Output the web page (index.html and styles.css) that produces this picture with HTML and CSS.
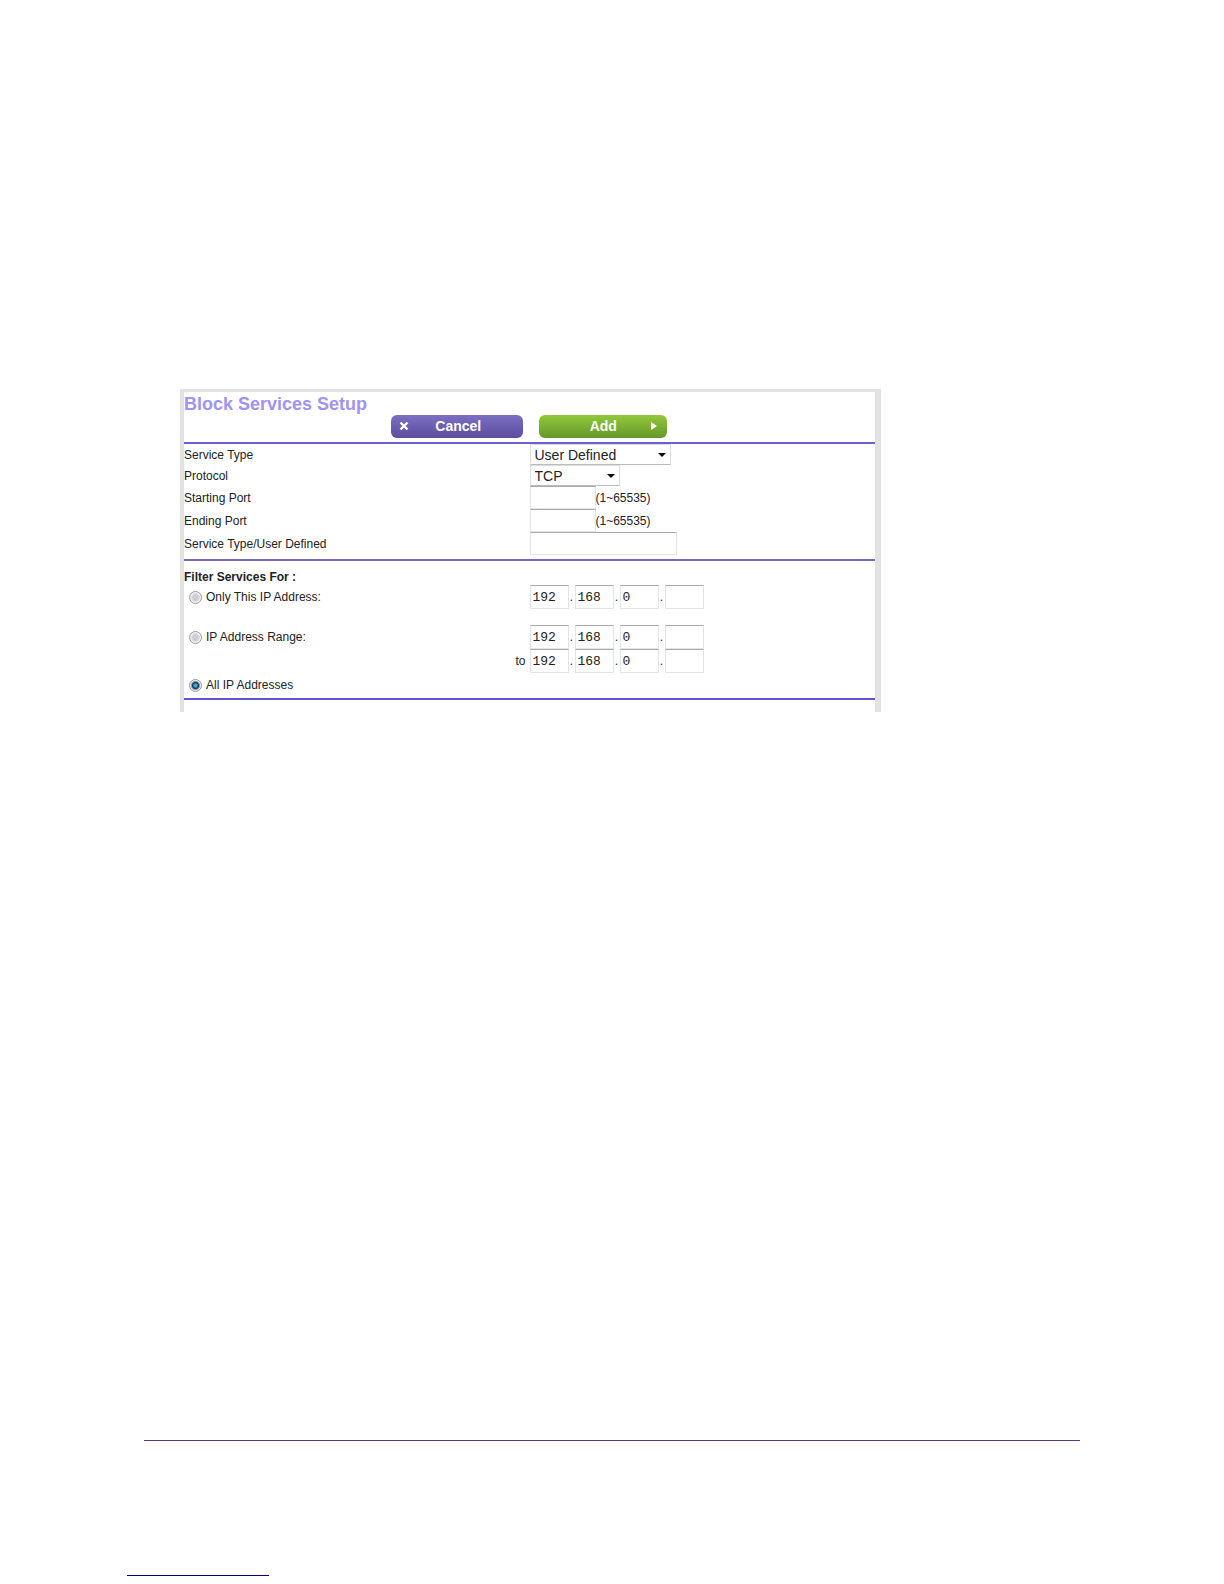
FILE: index.html
```html
<!DOCTYPE html>
<html lang="en">
<head>
<meta charset="utf-8">
<meta name="viewport" content="width=device-width, initial-scale=1">
<title>Block Services Setup</title>
<link rel="stylesheet" href="styles.css">
</head>
<body>
<main>
<form class="panel">
  <h1>Block Services Setup</h1>
  <div class="actions">
    <button type="button" class="btn cancel">
      <svg width="10" height="10" viewBox="0 0 10 10" aria-hidden="true"><path d="M1.5 1.5l7 7M8.5 1.5l-7 7" stroke="#fff" stroke-width="2.4"/></svg>
      <span>Cancel</span>
    </button>
    <button type="button" class="btn add">
      <span>Add</span>
      <svg width="7" height="8" viewBox="0 0 7 8" aria-hidden="true"><path d="M0 0l6 4-6 4z" fill="#fff"/></svg>
    </button>
  </div>
  <section class="service">
    <div class="row"><label for="service">Service Type</label>
      <div class="field select wide"><select id="service"><option>User Defined</option></select><svg width="8" height="4" viewBox="0 0 8 4" aria-hidden="true"><path d="M0 0h8L4 4z"/></svg></div></div>
    <div class="row"><label for="protocol">Protocol</label>
      <div class="field select"><select id="protocol"><option>TCP</option></select><svg width="8" height="4" viewBox="0 0 8 4" aria-hidden="true"><path d="M0 0h8L4 4z"/></svg></div></div>
    <div class="row tall"><label for="start">Starting Port</label>
      <div class="field"><input type="text" class="port" id="start"><span class="hint">(1~65535)</span></div></div>
    <div class="row tall"><label for="end">Ending Port</label>
      <div class="field"><input type="text" class="port" id="end"><span class="hint">(1~65535)</span></div></div>
    <div class="row tall"><label for="custom">Service Type/User Defined</label>
      <div class="field"><input type="text" class="name" id="custom"></div></div>
  </section>
  <section class="filter">
    <h2>Filter Services For :</h2>
    <div class="row ip-row spaced">
      <label class="choice"><input type="radio" name="scope">Only This IP Address:</label>
      <div class="ip"><input type="text" value="192" aria-label="Address part 1"><i>.</i><input type="text" value="168" aria-label="Address part 2"><i>.</i><input type="text" value="0" aria-label="Address part 3"><i>.</i><input type="text" aria-label="Address part 4"></div>
    </div>
    <div class="row ip-row">
      <label class="choice"><input type="radio" name="scope">IP Address Range:</label>
      <div class="ip"><input type="text" value="192" aria-label="Range start part 1"><i>.</i><input type="text" value="168" aria-label="Range start part 2"><i>.</i><input type="text" value="0" aria-label="Range start part 3"><i>.</i><input type="text" aria-label="Range start part 4"></div>
    </div>
    <div class="row ip-row">
      <span class="to">to</span>
      <div class="ip"><input type="text" value="192" aria-label="Range end part 1"><i>.</i><input type="text" value="168" aria-label="Range end part 2"><i>.</i><input type="text" value="0" aria-label="Range end part 3"><i>.</i><input type="text" aria-label="Range end part 4"></div>
    </div>
    <div class="row ip-row">
      <label class="choice"><input type="radio" name="scope" checked>All IP Addresses</label>
    </div>
  </section>
</form>
</main>
<footer>
  <hr class="page-rule">
  <hr class="link-rule">
</footer>
</body>
</html>
```
FILE: styles.css
```css
* { box-sizing: border-box; }

body {
  margin: 0;
  min-height: 100vh;
  display: flex;
  flex-direction: column;
  background: #fff;
  color: #222;
  font: 12px/16px "Liberation Sans", Arial, sans-serif;
}

main { flex: 1; padding: 389px 16px 32px 180px; }

.panel {
  max-width: 701px;
  padding-bottom: 12px;
  border: solid #e2e2e2;
  border-width: 3px 6px 0 4px;
}

h1 {
  margin: 0;
  padding-top: 2px;
  color: #a193f3;
  font-size: 18px;
  line-height: 20px;
}

.actions {
  display: flex;
  gap: 16px;
  padding: 1px 0 4px 30%;
  border-bottom: 2px solid #6c5fd3;
}

.btn {
  display: grid;
  align-items: center;
  height: 23px;
  padding: 0 8px 2px;
  border: 0;
  border-radius: 6px;
  color: #fff;
  font: bold 14px/20px "Liberation Sans", Arial, sans-serif;
  text-align: center;
}

.cancel {
  width: 132px;
  padding-right: 16px;
  grid-template-columns: 10px 1fr;
  background: linear-gradient(#7c70c4, #5b4c9c);
}

.add {
  width: 128px;
  padding-left: 16px;
  grid-template-columns: 1fr 8px;
  background: linear-gradient(#93c83c, #64962a);
}

.row {
  display: grid;
  grid-template-columns: 1fr 1fr;
  align-items: center;
  min-height: 21px;
}

.tall { min-height: 23px; }

.service {
  padding-bottom: 4px;
  border-bottom: 2px solid #7567c8;
}

.service .row:not(.tall) { min-height: 20px; }

.field, .ip { display: flex; align-items: center; }

.select {
  position: relative;
  width: 90px;
}

.wide { width: 141px; }

.select svg {
  position: absolute;
  right: 5px;
  pointer-events: none;
}

select {
  appearance: none;
  width: 100%;
  height: 21px;
  padding: 0 4px;
  border: 1px solid #ddd;
  border-bottom-color: #bbb;
  border-radius: 0;
  background: #fff;
  color: #222;
  font: 14px/18px "Liberation Sans", Arial, sans-serif;
}

input[type="text"] {
  height: 23px;
  padding: 0 2px;
  border: 1px solid #e1e4ec;
  border-top-color: #aaa;
  background: #fff;
  color: #222;
  font: 13px/16px "Liberation Mono", "Courier New", monospace;
}

.port { width: 66px; }
.name { width: 147px; }

.filter {
  padding: 8px 0 1px;
  border-bottom: 2px solid #6255cf;
}

h2 {
  margin: 0;
  font-size: 12px;
  line-height: 16px;
}

.ip-row { min-height: 24px; }
.spaced { margin-bottom: 16px; }

.choice {
  display: flex;
  align-items: center;
  gap: 4px;
  padding-left: 5px;
}

input[type="radio"] {
  appearance: none;
  width: 13px;
  height: 13px;
  margin: 0;
  border: 1px solid #999;
  border-radius: 50%;
  background: radial-gradient(circle, #ccc 0 2px, #ddd 4px, #f4f4f4 5px);
}

input[type="radio"]:checked {
  background: radial-gradient(circle, #4bb0d8 0 1px, #123a5c 3px, #eee 5px);
}

.ip input[type="text"] { width: 39px; height: 24px; }

.ip i {
  width: 6px;
  font-style: normal;
  text-align: center;
}

.to { padding-right: 4px; text-align: right; }

footer { padding: 0 144px 8px 127px; }

hr { margin: 0; border: 0; height: 1px; }

.page-rule { margin-left: 17px; background: #573a70; }

.link-rule { width: 142px; margin-top: 134px; background: #000080; }
```
